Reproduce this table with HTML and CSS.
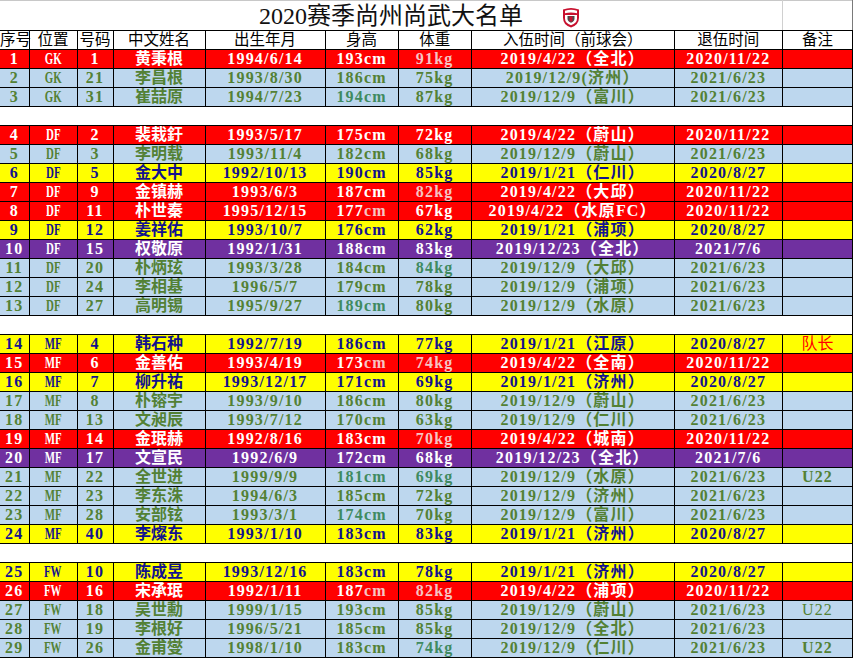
FILE: index.html
```html
<!DOCTYPE html>
<html lang="zh-CN">
<head>
<meta charset="utf-8">
<title>2020赛季尚州尚武大名单</title>
<link rel="stylesheet" href="styles.css">
</head>
<body>
<div class="sheet">
<table class="roster">
<colgroup>
<col class="c1"><col class="c2"><col class="c3"><col class="c4"><col class="c5"><col class="c6"><col class="c7"><col class="c8"><col class="c9"><col class="c10">
</colgroup>
<tbody>
<tr class="title-row"><td colspan="9" class="title">2020赛季尚州尚武大名单</td><td class="title-end"></td></tr>
<tr class="head"><td>序号</td><td>位置</td><td>号码</td><td>中文姓名</td><td>出生年月</td><td>身高</td><td>体重</td><td>入伍时间（前球会）</td><td>退伍时间</td><td>备注</td></tr>
<tr class="red"><td>1</td><td><span class="pos">GK</span></td><td>1</td><td class="nm">黄秉根</td><td>1994/6/14</td><td>193cm</td><td class="pk">91kg</td><td>2019/4/22（全北）</td><td>2020/11/22</td><td></td></tr>
<tr class="blue"><td>2</td><td><span class="pos">GK</span></td><td>21</td><td class="nm">李昌根</td><td>1993/8/30</td><td>186cm</td><td>75kg</td><td>2019/12/9(济州）</td><td>2021/6/23</td><td></td></tr>
<tr class="blue"><td>3</td><td><span class="pos">GK</span></td><td>31</td><td class="nm">崔喆原</td><td>1994/7/23</td><td class="tl">194cm</td><td>87kg</td><td>2019/12/9（富川）</td><td>2021/6/23</td><td></td></tr>
<tr class="gap"><td colspan="10"></td></tr>
<tr class="red"><td>4</td><td><span class="pos">DF</span></td><td>2</td><td class="nm">裴栽釪</td><td>1993/5/17</td><td>175cm</td><td>72kg</td><td>2019/4/22（蔚山）</td><td>2020/11/22</td><td></td></tr>
<tr class="blue"><td>5</td><td><span class="pos">DF</span></td><td>3</td><td class="nm">李明载</td><td>1993/11/4</td><td>182cm</td><td>68kg</td><td>2019/12/9（蔚山）</td><td>2021/6/23</td><td></td></tr>
<tr class="yellow"><td>6</td><td><span class="pos">DF</span></td><td>5</td><td class="nm">金大中</td><td>1992/10/13</td><td>190cm</td><td>85kg</td><td>2019/1/21（仁川）</td><td>2020/8/27</td><td></td></tr>
<tr class="red"><td>7</td><td><span class="pos">DF</span></td><td>9</td><td class="nm">金镇赫</td><td>1993/6/3</td><td>187cm</td><td class="pk">82kg</td><td>2019/4/22（大邱）</td><td>2020/11/22</td><td></td></tr>
<tr class="red"><td>8</td><td><span class="pos">DF</span></td><td>11</td><td class="nm">朴世秦</td><td>1995/12/15</td><td>177<span class="pk">cm</span></td><td>67kg</td><td>2019/4/22（水原FC）</td><td>2020/11/22</td><td></td></tr>
<tr class="yellow"><td>9</td><td><span class="pos">DF</span></td><td>12</td><td class="nm">姜祥佑</td><td>1993/10/7</td><td>176cm</td><td>62kg</td><td>2019/1/21（浦项）</td><td>2020/8/27</td><td></td></tr>
<tr class="purple"><td>10</td><td><span class="pos">DF</span></td><td>15</td><td class="nm">权敬原</td><td>1992/1/31</td><td>188cm</td><td>83kg</td><td>2019/12/23（全北）</td><td>2021/7/6</td><td></td></tr>
<tr class="blue"><td>11</td><td><span class="pos">DF</span></td><td>20</td><td class="nm">朴炳玹</td><td>1993/3/28</td><td>184cm</td><td class="tl">84kg</td><td>2019/12/9（大邱）</td><td>2021/6/23</td><td></td></tr>
<tr class="blue"><td>12</td><td><span class="pos">DF</span></td><td>24</td><td class="nm">李相基</td><td>1996/5/7</td><td>179cm</td><td>78kg</td><td>2019/12/9（浦项）</td><td>2021/6/23</td><td></td></tr>
<tr class="blue"><td>13</td><td><span class="pos">DF</span></td><td>27</td><td class="nm">高明锡</td><td>1995/9/27</td><td class="tl">189cm</td><td>80kg</td><td>2019/12/9（水原）</td><td>2021/6/23</td><td></td></tr>
<tr class="gap"><td colspan="10"></td></tr>
<tr class="yellow"><td>14</td><td><span class="pos">MF</span></td><td>4</td><td class="nm">韩石种</td><td>1992/7/19</td><td>186cm</td><td>77kg</td><td>2019/1/21（江原）</td><td>2020/8/27</td><td class="cap">队长</td></tr>
<tr class="red"><td>15</td><td><span class="pos">MF</span></td><td>6</td><td class="nm">金善佑</td><td>1993/4/19</td><td>173<span class="pk">cm</span></td><td class="pk">74kg</td><td>2019/4/22（全南）</td><td>2020/11/22</td><td></td></tr>
<tr class="yellow"><td>16</td><td><span class="pos">MF</span></td><td>7</td><td class="nm">柳升祐</td><td>1993/12/17</td><td>171cm</td><td>69kg</td><td>2019/1/21（济州）</td><td>2020/8/27</td><td></td></tr>
<tr class="blue"><td>17</td><td><span class="pos">MF</span></td><td>8</td><td class="nm">朴镕宇</td><td>1993/9/10</td><td>186cm</td><td>80kg</td><td>2019/12/9（蔚山）</td><td>2021/6/23</td><td></td></tr>
<tr class="blue"><td>18</td><td><span class="pos">MF</span></td><td>13</td><td class="nm">文昶辰</td><td>1993/7/12</td><td>170cm</td><td>63kg</td><td>2019/12/9（仁川）</td><td>2021/6/23</td><td></td></tr>
<tr class="red"><td>19</td><td><span class="pos">MF</span></td><td>14</td><td class="nm">金珉赫</td><td>1992/8/16</td><td>183cm</td><td class="pk">70kg</td><td>2019/4/22（城南）</td><td>2020/11/22</td><td></td></tr>
<tr class="purple"><td>20</td><td><span class="pos">MF</span></td><td>17</td><td class="nm">文宣民</td><td>1992/6/9</td><td>172cm</td><td>68kg</td><td>2019/12/23（全北）</td><td>2021/7/6</td><td></td></tr>
<tr class="blue"><td>21</td><td><span class="pos">MF</span></td><td>22</td><td class="nm">全世进</td><td>1999/9/9</td><td class="tl">181cm</td><td class="tl">69kg</td><td>2019/12/9（水原）</td><td>2021/6/23</td><td>U22</td></tr>
<tr class="blue"><td>22</td><td><span class="pos">MF</span></td><td>23</td><td class="nm">李东洙</td><td>1994/6/3</td><td>185cm</td><td>72kg</td><td>2019/12/9（济州）</td><td>2021/6/23</td><td></td></tr>
<tr class="blue"><td>23</td><td><span class="pos">MF</span></td><td>28</td><td class="nm">安部铉</td><td>1993/3/1</td><td class="tl">174cm</td><td>70kg</td><td>2019/12/9（富川）</td><td>2021/6/23</td><td></td></tr>
<tr class="yellow"><td>24</td><td><span class="pos">MF</span></td><td>40</td><td class="nm">李燦东</td><td>1993/1/10</td><td>183cm</td><td>83kg</td><td>2019/1/21（济州）</td><td>2020/8/27</td><td></td></tr>
<tr class="gap"><td colspan="10"></td></tr>
<tr class="yellow"><td>25</td><td><span class="pos">FW</span></td><td>10</td><td class="nm">陈成昱</td><td>1993/12/16</td><td>183cm</td><td>78kg</td><td>2019/1/21（济州）</td><td>2020/8/27</td><td></td></tr>
<tr class="red"><td>26</td><td><span class="pos">FW</span></td><td>16</td><td class="nm">宋承珉</td><td>1992/1/11</td><td>187<span class="pk">cm</span></td><td class="pk">82kg</td><td>2019/4/22（浦项）</td><td>2020/11/22</td><td></td></tr>
<tr class="blue"><td>27</td><td><span class="pos">FW</span></td><td>18</td><td class="nm">吴世勳</td><td>1999/1/15</td><td>193cm</td><td>85kg</td><td>2019/12/9（蔚山）</td><td>2021/6/23</td><td class="thin">U22</td></tr>
<tr class="blue"><td>28</td><td><span class="pos">FW</span></td><td>19</td><td class="nm">李根好</td><td>1996/5/21</td><td>185cm</td><td>85kg</td><td>2019/12/9（全北）</td><td>2021/6/23</td><td></td></tr>
<tr class="blue"><td>29</td><td><span class="pos">FW</span></td><td>26</td><td class="nm">金甫燮</td><td>1998/1/10</td><td>183cm</td><td class="tl">74kg</td><td>2019/12/9（仁川）</td><td>2021/6/23</td><td>U22</td></tr>
</tbody>
</table>
<svg class="logo" width="18" height="21" viewBox="0 0 18 21" aria-label="logo">
  <path d="M1 2.5 Q9 -0.5 17 2.5 L17 10.5 Q17 18 9 20.5 Q1 18 1 10.5 Z" fill="#c8102e"/>
  <path d="M3 3.8 Q9 1.8 15 3.8 V6.3 Q9 4.6 3 6.3 Z" fill="#ffffff"/>
  <path d="M3 8 H15 V11.5 Q15 16 9 18.2 Q3 16 3 11.5 Z" fill="#ffffff"/>
  <path d="M5.5 9 H12.5 V11.8 Q12.5 14.5 9 15.8 Q5.5 14.5 5.5 11.8 Z" fill="#4a4a4a"/>
  <rect x="7.5" y="9.5" width="3" height="5" fill="#c8102e"/>
</svg>
</div>
</body>
</html>
```

FILE: styles.css
```css
html, body {
  margin: 0;
  padding: 0;
  background: #ffffff;
}

.sheet {
  position: relative;
  width: 854px;
  height: 659px;
  overflow: hidden;
}

.roster {
  border-collapse: collapse;
  table-layout: fixed;
  width: 853px;
  font-family: "Liberation Serif", "Noto Sans CJK SC", serif;
}

.c1 { width: 29px; }
.c2 { width: 48px; }
.c3 { width: 36px; }
.c4 { width: 92px; }
.c5 { width: 120px; }
.c6 { width: 73px; }
.c7 { width: 73px; }
.c8 { width: 203px; }
.c9 { width: 108px; }
.c10 { width: 70px; }

.roster td {
  border: 1px solid #000000;
  padding: 0;
  height: 18px;
  line-height: 18px;
  font-size: 16px;
  font-weight: bold;
  letter-spacing: 1.2px;
  text-align: center;
  vertical-align: middle;
  white-space: nowrap;
  overflow: visible;
}

.roster tr > td:first-child {
  border-left: none;
}

.roster .nm {
  letter-spacing: 0;
}

.pos {
  display: inline-block;
  vertical-align: top;
  height: 18px;
  letter-spacing: 0;
  font-size: 17px;
  line-height: 18px;
  transform: scaleX(0.64);
}

.roster .title-row td {
  height: 29px;
  border-top: 1px solid #c8c8c8;
  border-bottom: 1px solid #000000;
  font-weight: normal;
  letter-spacing: 0;
}

.roster .title {
  font-size: 24px;
  line-height: 28px;
  vertical-align: bottom;
  color: #111111;
  border-right: 1px solid #d0d0d0;
}

.roster .title-end {
  border-right: 1px solid #7a7a7a;
}

.roster .head td {
  font-weight: normal;
  font-size: 15.5px;
  letter-spacing: 0;
  color: #000000;
  background: #ffffff;
}

.roster .head td:first-child {
  text-align: left;
}

.gap td {
  background: #ffffff;
  border-left: none;
  border-right: 1px solid #000000;
}

.red td { background: #ff0000; color: #ffffff; }
.blue td { background: #bdd7ee; color: #538135; }
.yellow td { background: #ffff00; color: #12128e; }
.purple td { background: #7030a0; color: #ffffff; }

.red .pk, .red td.pk { color: #f6c4c4; }
.blue td.tl { color: #3f8a60; }
.roster .yellow td.cap { color: #ff0000; font-weight: normal; letter-spacing: 0; }
.blue td.thin { font-weight: normal; }

.logo {
  position: absolute;
  left: 562px;
  top: 7px;
}
```
